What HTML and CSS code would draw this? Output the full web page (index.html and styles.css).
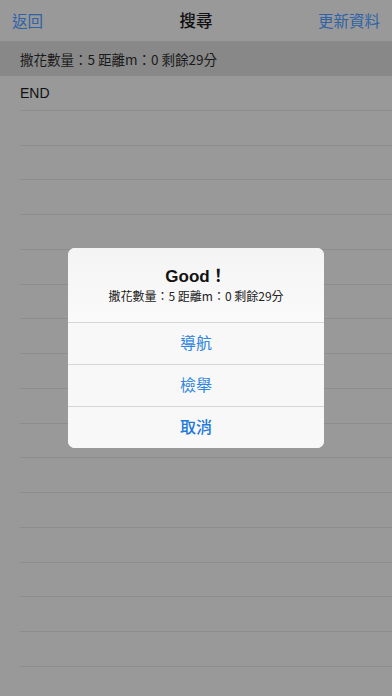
FILE: index.html
```html
<!DOCTYPE html>
<html lang="zh-Hant">
<head>
<meta charset="utf-8">
<link rel="stylesheet" href="styles.css">
</head>
<body>
<div class="screen">
  <header class="nav">
    <span class="nav-btn">返回</span>
    <span class="nav-title">搜尋</span>
    <span class="nav-btn">更新資料</span>
  </header>
  <div class="section-head">撒花數量<span class="colon">：</span>5 距離m<span class="colon">：</span>0 剩餘29分</div>
  <ul class="list">
    <li class="row">END</li>
    <li class="row"></li><li class="row"></li><li class="row"></li><li class="row"></li>
    <li class="row"></li><li class="row"></li><li class="row"></li><li class="row"></li>
    <li class="row"></li><li class="row"></li><li class="row"></li><li class="row"></li>
    <li class="row"></li><li class="row"></li><li class="row"></li><li class="row"></li>
    <li class="row"></li>
  </ul>
  <div class="alert">
    <div class="alert-body">
      <div class="alert-title">Good！</div>
      <div class="alert-msg">撒花數量<span class="colon-sm">：</span>5 距離m<span class="colon-sm">：</span>0 剩餘29分</div>
    </div>
    <div class="alert-btn">導航</div>
    <div class="alert-btn">檢舉</div>
    <div class="alert-btn alert-btn-bold">取消</div>
  </div>
</div>
</body>
</html>
```
FILE: styles.css
```css
* { box-sizing: border-box; margin: 0; padding: 0; }
html, body { width: 392px; height: 696px; overflow: hidden; }
body {
  background: #999999;
  font-family: "Noto Sans CJK TC", "Noto Sans", "Liberation Sans", sans-serif;
  color: #111;
}
.screen { position: relative; width: 392px; height: 696px; }
.nav {
  position: relative;
  height: 41px;
  display: flex;
  align-items: center;
  justify-content: space-between;
  padding: 0 12px 2px 12px;
  background: #999999;
}
.nav-btn { font-size: 15.5px; color: #2f63a6; }
.nav-title {
  position: absolute; left: 0; right: 0; top: 0; height: 41px;
  display: flex; align-items: center; justify-content: center;
  padding-bottom: 2px;
  font-size: 16.5px; font-weight: 500; color: #111;
}
.section-head {
  height: 35px;
  display: flex;
  align-items: center;
  padding-left: 20px;
  background: #888888;
  font-size: 13.5px;
  color: #1a1a1a;
}
.colon { letter-spacing: -3px; margin-right: 3px; }
.colon-sm { letter-spacing: -2px; margin-right: 2px; }
.list { list-style: none; }
.row {
  height: 34.75px;
  margin-left: 20px;
  border-bottom: 1px solid #8d8d8d;
  display: flex;
  align-items: center;
  font-size: 14px;
  color: #111;
  font-family: "Liberation Sans", "Noto Sans CJK TC", sans-serif;
}
.alert {
  position: absolute;
  left: 68px; top: 248px;
  width: 256px;
  background: #f6f6f6;
  border-radius: 7px;
  overflow: hidden;
}
.alert-body {
  height: 74px;
  display: flex; flex-direction: column; align-items: center;
  padding-top: 19px;
  background: linear-gradient(#f4f4f4, #fafafa);
}
.alert-title {
  font-family: "Liberation Sans", "Noto Sans CJK TC", sans-serif;
  font-size: 17px; font-weight: 600; line-height: 19px; color: #111;
}
.alert-msg { font-size: 12px; line-height: 16px; margin-top: 2px; color: #222; }
.alert-btn {
  height: 42px;
  border-top: 1px solid #d6d6d6;
  display: flex; align-items: center; justify-content: center;
  padding-bottom: 4px;
  font-size: 16px; color: #2f86dc;
  background: #f8f8f8;
}
.alert-btn-bold { font-weight: 500; color: #1f7ad8; }
```
